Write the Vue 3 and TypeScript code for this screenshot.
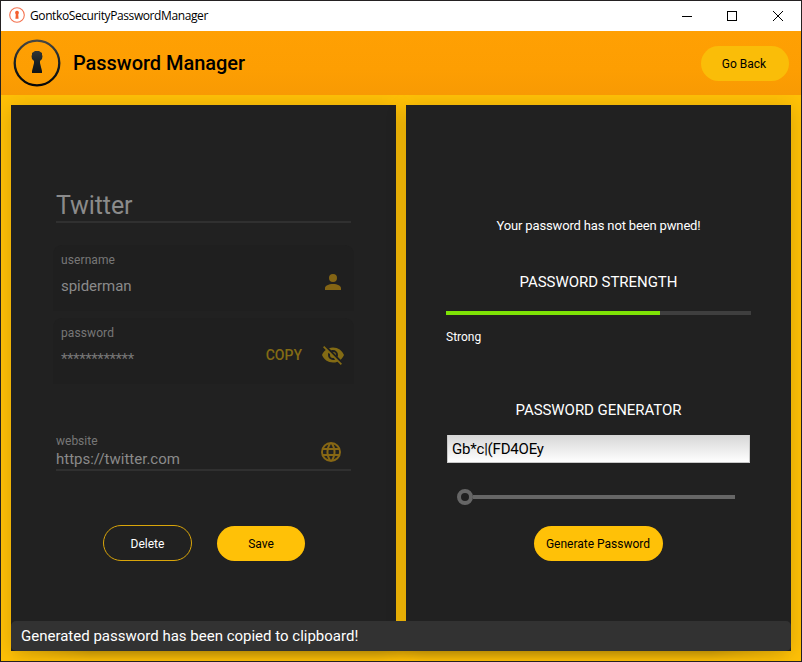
<script setup lang="ts">
import { ref } from 'vue'

const account = ref({
  title: 'Twitter',
  username: 'spiderman',
  password: '************',
  website: 'https://twitter.com',
})
const strength = ref({ percent: 70, label: 'Strong' })
const generated = ref('Gb*c|(FD4OEy')
</script>

<template>
  <div class="window">
    <div class="titlebar">
      <svg class="app-icon" viewBox="0 0 16 16">
        <circle cx="8" cy="8" r="7.3" fill="none" stroke="#f4724f" stroke-width="1.1" />
        <path d="M8 3.8a1.9 1.9 0 0 1 1.3 3.3v1.400l.3 3.300H6.400l.3-3.300V7.100A1.900 1.900 0 0 1 8 3.800z" fill="#f4602f" />
      </svg>
      <span class="app-name">GontkoSecurityPasswordManager</span>
      <svg class="controls" viewBox="0 0 104 12" shape-rendering="crispEdges">
        <path d="M0 6.500h10" stroke="#000" />
        <path d="M45.500 1.500h9v9h-9z" fill="none" stroke="#000" />
        <path d="M91 1l10 10M101 1L91 11" stroke="#000" shape-rendering="auto" />
      </svg>
    </div>

    <header class="header">
      <svg class="logo" viewBox="0 0 48 48">
        <defs>
          <linearGradient id="ink" x1="0" y1="0" x2="0" y2="48" gradientUnits="userSpaceOnUse">
            <stop offset="0" stop-color="#4a4a46" />
            <stop offset="0.5" stop-color="#182024" />
            <stop offset="1" stop-color="#050505" />
          </linearGradient>
        </defs>
        <circle cx="24" cy="24" r="22.300" fill="none" stroke="url(#ink)" stroke-width="2.300" />
        <path d="M22 12h4l3 2v2l.5 1-.5 3-2 2v2l1.500 6 .5 2v2H19v-2l.5-2 1.500-6v-2l-2-2-.5-3 .5-1v-2z" fill="url(#ink)" />
      </svg>
      <h1>Password Manager</h1>
      <button class="pill back"><span>Go Back</span></button>
    </header>

    <main class="body">
      <section class="panel account">
        <div class="title-field"><span>{{ account.title }}</span></div>

        <div class="card">
          <div class="text">
            <label>username</label>
            <p class="value">{{ account.username }}</p>
          </div>
          <svg class="icon user" viewBox="0 0 24 24">
            <path d="M12 4a4 4 0 1 1 0 8 4 4 0 0 1 0-8zM12 14c4.420 0 8 1.790 8 4v2H4v-2c0-2.210 3.580-4 8-4z" />
          </svg>
        </div>

        <div class="card secret">
          <div class="text">
            <label>password</label>
            <p class="value stars">{{ account.password }}</p>
          </div>
          <span class="copy">COPY</span>
          <svg class="icon eye" viewBox="0 0 24 24">
            <path d="M11.830 9L15 12.160V12a3 3 0 0 0-3-3h-.17m-4.300.8l1.550 1.550c-.05.210-.08.420-.08.650a3 3 0 0 0 3 3c.22 0 .44-.03.650-.08l1.550 1.550c-.67.330-1.410.530-2.200.530a5 5 0 0 1-5-5c0-.79.200-1.530.530-2.200M2 4.270l2.280 2.280.450.450C3.080 8.300 1.780 10 1 12c1.730 4.390 6 7.500 11 7.500 1.550 0 3.030-.3 4.380-.84l.43.420L19.730 22 21 20.730 3.270 3M12 7a5 5 0 0 1 5 5c0 .640-.13 1.260-.36 1.820l2.930 2.930c1.500-1.250 2.700-2.890 3.430-4.750-1.730-4.390-6-7.500-11-7.500-1.400 0-2.740.250-4 .7l2.170 2.150C10.740 7.130 11.350 7 12 7z" />
          </svg>
        </div>

        <div class="site-field">
          <div>
            <label>website</label>
            <p class="value url">{{ account.website }}</p>
          </div>
          <svg class="icon globe" viewBox="0 0 24 24">
            <path d="M16.360 14c.08-.66.140-1.320.140-2s-.06-1.340-.14-2h3.380c.160.640.260 1.310.260 2s-.1 1.360-.26 2m-5.150 5.560c.6-1.110 1.060-2.310 1.380-3.560h2.950a8.030 8.030 0 0 1-4.330 3.560M14.340 14H9.660c-.1-.66-.16-1.320-.16-2s.06-1.350.160-2h4.680c.09.650.160 1.320.160 2s-.07 1.340-.16 2M12 19.960c-.83-1.200-1.500-2.530-1.910-3.960h3.820c-.41 1.430-1.080 2.760-1.910 3.960M8 8H5.080A7.923 7.923 0 0 1 9.400 4.440C8.800 5.550 8.350 6.750 8 8m-2.920 8H8c.35 1.250.8 2.450 1.400 3.560A8.008 8.008 0 0 1 5.080 16m-.82-2C4.100 13.360 4 12.690 4 12s.1-1.360.260-2h3.380c-.08.660-.14 1.320-.14 2s.06 1.340.140 2M12 4.030c.83 1.200 1.500 2.540 1.910 3.970h-3.820c.41-1.430 1.080-2.770 1.910-3.970M18.920 8h-2.950a15.650 15.650 0 0 0-1.380-3.560c1.840.630 3.370 1.900 4.330 3.560M12 2a10 10 0 1 0 0 20 10 10 0 0 0 0-20z" />
          </svg>
        </div>

        <div class="actions">
          <button class="pill outline"><span>Delete</span></button>
          <button class="pill save"><span>Save</span></button>
        </div>
      </section>

      <section class="panel tools">
        <p class="pwned"><span>Your password has not been pwned!</span></p>
        <h2 class="h-strength"><span>PASSWORD STRENGTH</span></h2>
        <div class="meter"><div class="fill" :style="{ width: strength.percent + '%' }"></div></div>
        <p class="rating"><span>{{ strength.label }}</span></p>
        <h2 class="h-generator"><span>PASSWORD GENERATOR</span></h2>
        <div class="output"><span>{{ generated }}</span></div>
        <div class="slider"><span class="thumb"></span><span class="track"></span></div>
        <button class="pill generate"><span>Generate Password</span></button>
      </section>
      <div class="snackbar"><span>Generated password has been copied to clipboard!</span></div>
    </main>
  </div>
</template>

<style>
body { margin: 0; }
</style>

<style scoped>
* { box-sizing: border-box; }
h1, h2, p { margin: 0; font-weight: 400; }
.window {
  width: 802px; height: 662px; border: 1px solid #242122;
  display: flex; flex-direction: column; overflow: hidden;
  font-family: Roboto, "Liberation Sans", sans-serif; color: #fff;
}
.titlebar { height: 30px; flex: none; background: #fff; display: flex; align-items: center; padding-left: 8px; }
.app-icon { width: 16px; height: 16px; margin-top: -2px; }
.app-name { margin: 0 0 0 5px; color: #000; font: 12px/16px "Open Sans", "Noto Sans", sans-serif; letter-spacing: -0.400px; white-space: nowrap; }
.controls { width: 104px; height: 12px; margin: -1px 15px 0 auto; }
.header {
  height: 64px; flex: none; display: flex; align-items: center; padding: 0 12px;
  background: linear-gradient(#ffa003, #fd9e02 60%, #f89a03);
}
.logo { width: 48px; height: 48px; }
h1 { margin-left: 12px; color: #000; font-size: 20px; font-weight: 500; line-height: 24px; letter-spacing: -0.040px; }
.pill {
  border: 0; padding: 0; height: 35px; width: 88px; border-radius: 18px; background: #ffc107; color: #000;
  font: 12px/14px Roboto, sans-serif; display: flex; align-items: center; justify-content: center; white-space: nowrap;
}
.back { margin-left: auto; padding: 2px 2px 0 0; background: #fabd08; }
.body {
  flex: 1; min-height: 0; padding: 10px; display: grid; grid-template-columns: 385px 385px; grid-template-rows: 516px 30px; column-gap: 10px;
  background: #ffc107; overflow: hidden;
}
.panel { grid-row: 1 / 3; background: #212121; display: flex; flex-direction: column; box-shadow: 0 3px 20px rgba(0, 0, 0, .16); }
.account { grid-column: 1; padding: 86px 42px 0; }
label { display: block; font-size: 12px; line-height: 14px; color: #777; }
.card label { letter-spacing: 0.100px; }
.value { font-size: 15px; line-height: 18px; color: #8a8a8a; }
.title-field { margin: 0 3px; height: 32px; border-bottom: 2px solid #303030; font-size: 25px; line-height: 30px; letter-spacing: -0.100px; color: #8b8b8b; }
.card { height: 66px; margin-top: 22px; border-radius: 9px 9px 0 0; background: #1f1f1f; display: flex; align-items: flex-start; padding: 8px 9px 0 8px; }
.card.secret { margin-top: 7px; }
.text { flex: 1; }
.card .value { margin-top: 10px; letter-spacing: -0.040px; }
.card .stars { margin-top: 10px; color: #777; letter-spacing: -0.400px; }
.icon { flex: none; width: 24px; height: 24px; fill: #836414; }
.user { margin: 17px 0 0; }
.copy { color: #836b14; font-size: 14px; font-weight: 500; line-height: 16px; margin: 21px 19px 0 0; }
.eye { margin-top: 17px; fill: #836b14; }
.site-field { margin: 50px 3px 0; height: 37px; border-bottom: 2px solid #303030; display: flex; justify-content: space-between; }
.url { margin-top: 2px; }
.globe { margin: 6px 8px 0 0; fill: #876714; }
.actions { display: flex; align-items: center; gap: 25px; margin: 54px 0 0 50px; }
.outline { background: none; border: 1px solid #d9a50a; color: #fff; width: 89px; height: 36px; padding-top: 1px; }
.save { padding-top: 1px; }
.tools { grid-column: 2; align-items: center; padding-top: 113px; }
.pwned { font-size: 13px; line-height: 16px; letter-spacing: -0.150px; }
h2 { font-size: 15px; line-height: 18px; letter-spacing: -0.050px; }
.h-strength { margin-top: 39px; }
.meter { width: 305px; height: 4px; margin-top: 20px; background: #3f3f3f; }
.fill { height: 100%; background: #7ee306; }
.rating { align-self: flex-start; margin: 15px 0 0 40px; font-size: 12px; line-height: 14px; }
.h-generator { margin-top: 57px; }
.output { width: 303px; height: 28px; margin-top: 16px; padding-left: 4px; border: 1px solid #c9c9c9; border-top: 0; background: linear-gradient(#d6d6d6, #fff); color: #000; font-size: 15px; line-height: 28px; letter-spacing: -0.200px; }
.slider { width: 278px; height: 16px; margin: 26px 5px 0 0; display: flex; align-items: center; }
.thumb { width: 16px; height: 16px; border: 4px solid #666; border-radius: 50%; }
.track { flex: 1; height: 4px; background: #666; }
.generate { width: 129px; margin-top: 21px; padding: 1px 1px 0 0; }
.snackbar { position: relative; grid-column: 1 / 3; grid-row: 2; width: 780px; height: 30px; border-radius: 5px; background: #323232; font-size: 15px; line-height: 30px; padding-left: 10px; }
.snackbar::after { content: ""; position: absolute; left: 0; right: 0; top: 100%; height: 10px; background: linear-gradient(rgba(0, 0, 0, .18), transparent); mask-image: linear-gradient(90deg, transparent, #000 80px calc(100% - 80px), transparent); }
</style>
